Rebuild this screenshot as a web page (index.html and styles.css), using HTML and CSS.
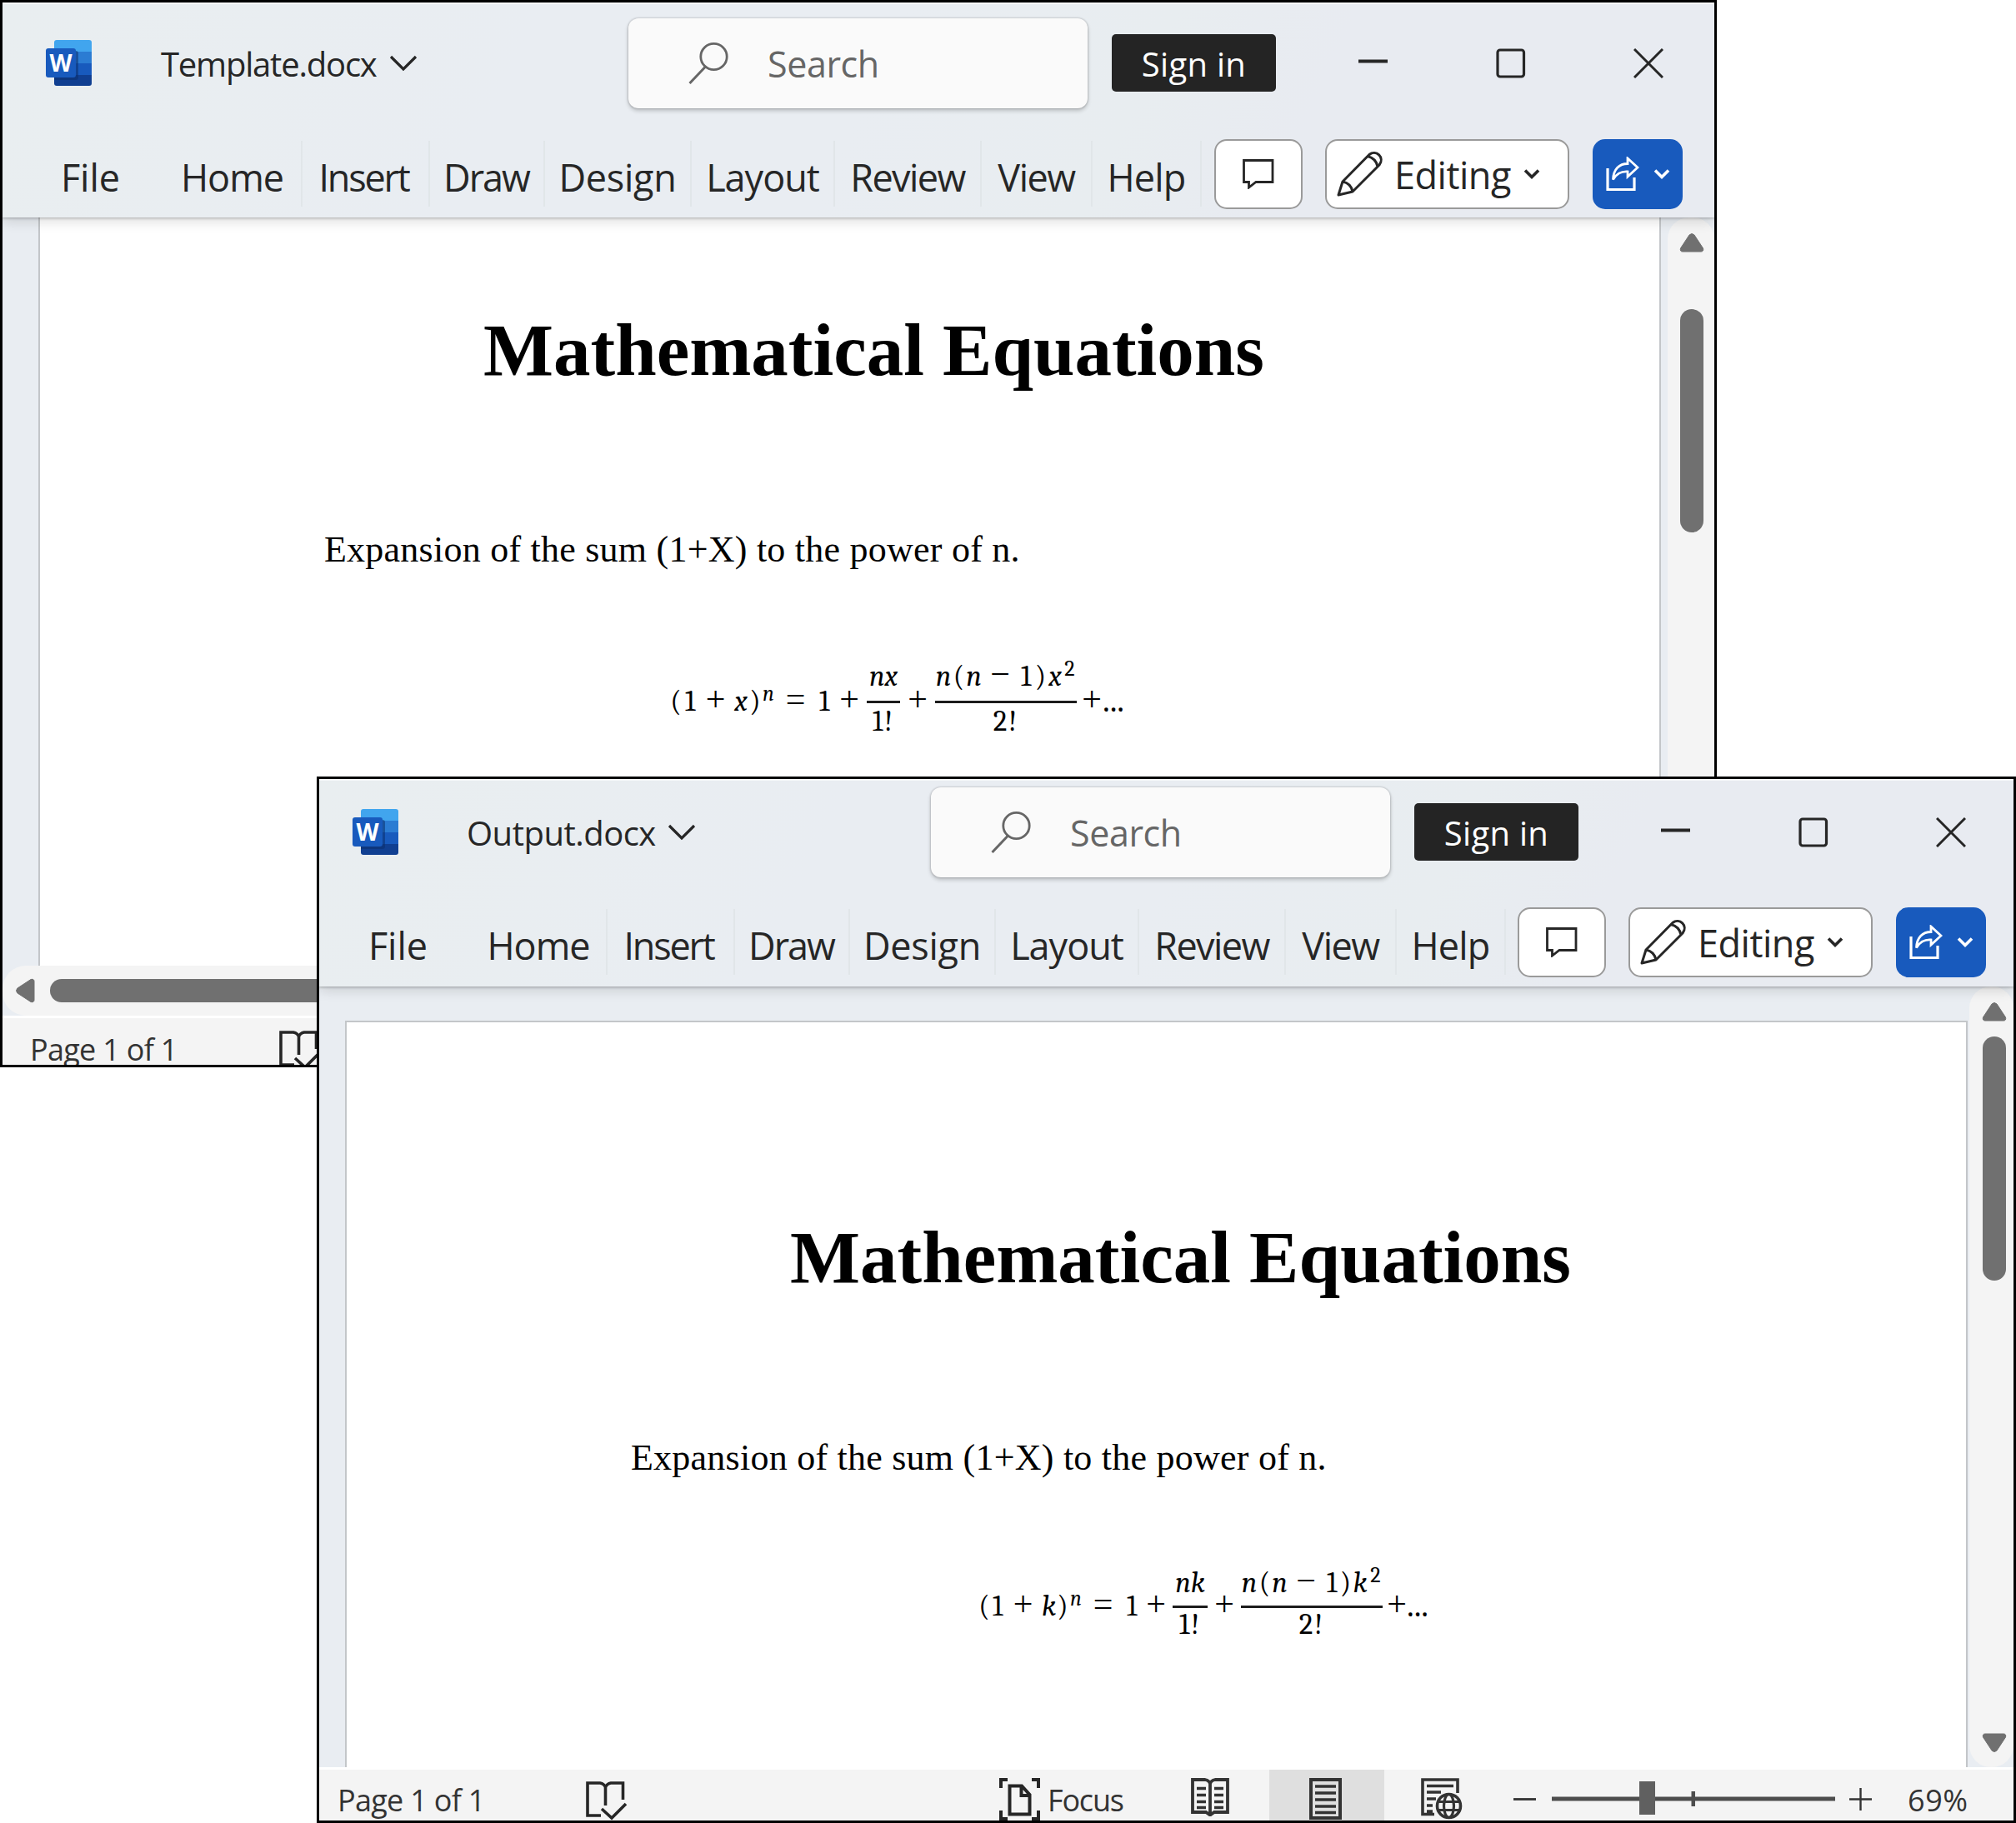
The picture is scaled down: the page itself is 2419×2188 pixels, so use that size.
FILE: index.html
```
<!DOCTYPE html>
<html lang="en">
<head>
<meta charset="utf-8">
<title>Mathematical Equations</title>
<link rel="stylesheet" href="styles.css">
</head>
<body>
<svg class="defs" width="0" height="0" aria-hidden="true">
  <symbol id="word" viewBox="0 0 55 55">
    <clipPath id="sheet"><rect x="10" y="0" width="45" height="55" rx="3"/></clipPath>
    <g clip-path="url(#sheet)">
      <rect x="10" width="45" height="14" fill="#41a5ee"/>
      <rect x="10" y="14" width="45" height="14" fill="#2b7cd3"/>
      <rect x="10" y="28" width="45" height="14" fill="#185abd"/>
      <rect x="10" y="42" width="45" height="13" fill="#103f91"/>
      <rect x="3" y="13" width="36" height="35" rx="3" fill="#0b2f6e" opacity=".55"/>
    </g>
    <rect x="0" y="10" width="36" height="35" rx="3" fill="#185abd"/>
  </symbol>
  <symbol id="chev" viewBox="0 0 34 20"><path d="M2 2 17 17 32 2" fill="none" stroke="currentColor" stroke-width="3.2"/></symbol>
  <symbol id="chev-s" viewBox="0 0 20 14"><path d="M2 2.5 10 10.5 18 2.5" fill="none" stroke="currentColor" stroke-width="3.6"/></symbol>
  <symbol id="lens" viewBox="0 0 48 52"><circle cx="30.500" cy="18" r="15.700" fill="none" stroke="currentColor" stroke-width="2.800"/><path d="M20.500 30 1.500 50" fill="none" stroke="currentColor" stroke-width="3"/></symbol>
  <symbol id="min" viewBox="0 0 36 36"><path d="M0 15.500H35" stroke="currentColor" stroke-width="4"/></symbol>
  <symbol id="max" viewBox="0 0 36 36"><rect x="2" y="2" width="31.500" height="32" rx="3" fill="none" stroke="currentColor" stroke-width="3.200"/></symbol>
  <symbol id="close" viewBox="0 0 36 36"><path d="M1 1 35 35M35 1 1 35" stroke="currentColor" stroke-width="3"/></symbol>
  <symbol id="comment" viewBox="0 0 38 36"><path d="M1.500 1.500H36V27.500H16L7.500 34V27.500H1.500Z" fill="none" stroke="currentColor" stroke-width="2.800"/></symbol>
  <symbol id="pencil" viewBox="0 0 56 56"><path d="M2 53 7 37 39 4.500C47-2 58 8 51 17L19 49ZM7 37Q17 39 19 49M37 6.500Q47 9 49 19" fill="none" stroke="currentColor" stroke-width="3" stroke-linejoin="round"/></symbol>
  <symbol id="share" viewBox="0 0 40 42"><path d="M2 14V39.500H34V25" fill="none" stroke="currentColor" stroke-width="3.200"/><path d="M26 2 38 13 26 24V18C18 17.500 13 20 8.500 27.500 9 15 16 8.500 26 8.500Z" fill="none" stroke="currentColor" stroke-width="2.800"/></symbol>
  <symbol id="arrow" viewBox="0 0 32 26"><path d="M13 4Q16 1 19 4L29.500 20Q30.500 24 27 24H5Q1.500 24 2.500 20Z" fill="#707070" stroke="#707070"/></symbol>
  <symbol id="proof" viewBox="0 0 50 48"><path d="M18 41H2V2H17Q22 3 23.500 7 25 3 30 2H44.500V22M23.500 7V29M19 33 31 44 48 27" fill="none" stroke="currentColor" stroke-width="3.600"/></symbol>
  <symbol id="focus" viewBox="0 0 50 51"><path d="M2 12V2H10M39 2H47V12M2 39V49H10M39 49H47V39" fill="none" stroke="currentColor" stroke-width="4"/><path d="M12.500 9.500H27L36.500 20V43.500H12.500ZM26.500 10V21H36.500" fill="none" stroke="currentColor" stroke-width="4"/></symbol>
  <symbol id="read" viewBox="0 0 46 46"><path d="M2 2H17Q22 3 23 7 24 3 29 2H44V41H28L23 44.500 18 41H2ZM23 7V43" fill="none" stroke="currentColor" stroke-width="3.800"/><path d="M7 12.500H18M7 20.500H18M7 28.500H18M7 35.500H18M28 12.500H39M28 20.500H39M28 28.500H39M28 35.500H39" stroke="currentColor" stroke-width="3.400"/></symbol>
  <symbol id="print" viewBox="0 0 39 50"><rect x="2" y="2" width="35" height="46" fill="none" stroke="currentColor" stroke-width="4"/><path d="M7 10H32M7 18H32M7 26H32M7 34H32M7 41.500H32" stroke="currentColor" stroke-width="3.600"/></symbol>
  <symbol id="web" viewBox="0 0 50 50"><path d="M16 43.500H2V2H44V18M7 9.500H39M7 17H24M7 25H18M7 33H14M7 40H14" fill="none" stroke="currentColor" stroke-width="3.600"/><circle cx="33.500" cy="33.500" r="14" fill="none" stroke="currentColor" stroke-width="3.600"/><ellipse cx="33.500" cy="33.500" rx="6" ry="14" fill="none" stroke="currentColor" stroke-width="3.200"/><path d="M20 28.500H47M20 38.500H47" stroke="currentColor" stroke-width="3.200"/></symbol>
  <symbol id="plus" viewBox="0 0 27 27"><path d="M0 13.500H27M13.500 0V27" stroke="currentColor" stroke-width="2.400"/></symbol>
  <symbol id="minus" viewBox="0 0 27 27"><path d="M0 13.500H27" stroke="currentColor" stroke-width="2.800"/></symbol>
</svg>

<main class="desktop">
  <section class="window template">
    <header class="chrome">
      <div class="titlebar">
        <svg class="logo" viewBox="0 0 55 55"><use href="#word"/><text x="18" y="37.500" text-anchor="middle" class="word-letter">W</text></svg>
        <span class="doc-name name-template">Template.docx</span>
        <svg class="chev"><use href="#chev"/></svg>
        <div class="search"><svg class="lens"><use href="#lens"/></svg><span>Search</span></div>
        <button class="signin">Sign in</button>
        <svg class="ctl"><use href="#min"/></svg>
        <svg class="ctl"><use href="#max"/></svg>
        <svg class="ctl"><use href="#close"/></svg>
      </div>
      <div class="ribbon">
        <nav class="tabs">
          <span class="tab file">File</span><span class="tab home">Home</span><span class="tab insert">Insert</span><span class="tab draw">Draw</span><span class="tab design">Design</span><span class="tab layout">Layout</span><span class="tab review">Review</span><span class="tab view">View</span><span class="tab help">Help</span>
        </nav>
        <button class="btn comment"><svg class="i-comment"><use href="#comment"/></svg></button>
        <button class="btn editing"><svg class="i-pencil"><use href="#pencil"/></svg><span>Editing</span><svg class="chev-s"><use href="#chev-s"/></svg></button>
        <button class="btn share"><svg class="i-share"><use href="#share"/></svg><svg class="chev-s"><use href="#chev-s"/></svg></button>
      </div>
    </header>
    <div class="canvas">
      <article class="page">
        <h1>Mathematical Equations</h1>
        <p>Expansion of the sum (1+X) to the power of n.</p>
        <div class="equation">
          <span class="w18">(</span><span class="w16">1</span><span class="w45 op">+</span><i class="w16">x</i><span class="w18">)</span><i class="w14 sup">n</i><span class="w51 op">=</span><span class="w18">1</span><span class="w42 op">+</span>
          <span class="frac w40"><span class="num"><i>nx</i></span><span class="den">1!</span></span>
          <span class="w42 op">+</span>
          <span class="frac w170"><span class="num"><i class="w20">n</i><span class="w17">(</span><i class="w19">n</i><span class="w44 op">−</span><span class="w18">1</span><span class="w17">)</span><i class="w18">x</i><span class="w17 sup">2</span></span><span class="den">2!</span></span>
          <span class="w36 op">+</span><span class="dots">...</span>
        </div>
      </article>
      <div class="vscroll"><svg class="arrow"><use href="#arrow"/></svg><div class="thumb"></div></div>
    </div>
    <div class="hscroll"><svg class="arrow left"><use href="#arrow"/></svg><div class="hthumb"></div></div>
    <footer class="status"><span class="pages">Page 1 of 1</span><svg class="i-proof"><use href="#proof"/></svg></footer>
  </section>

  <section class="window output">
    <header class="chrome">
      <div class="titlebar">
        <svg class="logo" viewBox="0 0 55 55"><use href="#word"/><text x="18" y="37.500" text-anchor="middle" class="word-letter">W</text></svg>
        <span class="doc-name name-output">Output.docx</span>
        <svg class="chev"><use href="#chev"/></svg>
        <div class="search"><svg class="lens"><use href="#lens"/></svg><span>Search</span></div>
        <button class="signin">Sign in</button>
        <svg class="ctl"><use href="#min"/></svg>
        <svg class="ctl"><use href="#max"/></svg>
        <svg class="ctl"><use href="#close"/></svg>
      </div>
      <div class="ribbon">
        <nav class="tabs">
          <span class="tab file">File</span><span class="tab home">Home</span><span class="tab insert">Insert</span><span class="tab draw">Draw</span><span class="tab design">Design</span><span class="tab layout">Layout</span><span class="tab review">Review</span><span class="tab view">View</span><span class="tab help">Help</span>
        </nav>
        <button class="btn comment"><svg class="i-comment"><use href="#comment"/></svg></button>
        <button class="btn editing"><svg class="i-pencil"><use href="#pencil"/></svg><span>Editing</span><svg class="chev-s"><use href="#chev-s"/></svg></button>
        <button class="btn share"><svg class="i-share"><use href="#share"/></svg><svg class="chev-s"><use href="#chev-s"/></svg></button>
      </div>
    </header>
    <div class="canvas">
      <article class="page">
        <h1>Mathematical Equations</h1>
        <p>Expansion of the sum (1+X) to the power of n.</p>
        <div class="equation">
          <span class="w16">(</span><span class="w16">1</span><span class="w45 op">+</span><i class="w16">k</i><span class="w18">)</span><i class="w14 sup">n</i><span class="w51 op">=</span><span class="w18">1</span><span class="w40 op">+</span>
          <span class="frac w42"><span class="num"><i>nk</i></span><span class="den">1!</span></span>
          <span class="w40 op">+</span>
          <span class="frac w170"><span class="num"><i class="w20">n</i><span class="w17">(</span><i class="w19">n</i><span class="w44 op">−</span><span class="w18">1</span><span class="w15">)</span><i class="w20">k</i><span class="w17 sup">2</span></span><span class="den">2!</span></span>
          <span class="w34 op">+</span><span class="dots">...</span>
        </div>
      </article>
      <div class="vscroll"><svg class="arrow"><use href="#arrow"/></svg><div class="thumb"></div><svg class="arrow down"><use href="#arrow"/></svg></div>
    </div>
    <footer class="status">
      <span class="pages">Page 1 of 1</span><svg class="i-proof"><use href="#proof"/></svg>
      <svg class="i-focus"><use href="#focus"/></svg><span class="focus">Focus</span>
      <span class="view-read"><svg class="i-read"><use href="#read"/></svg></span>
      <span class="view-print"><svg class="i-print"><use href="#print"/></svg></span>
      <svg class="i-web"><use href="#web"/></svg>
      <svg class="zoom-btn zoom-out"><use href="#minus"/></svg>
      <svg class="slider" viewBox="0 0 340 40"><path d="M0 21H340" stroke="#4d4d4d" stroke-width="5"/><rect x="105" y="0" width="19" height="40" fill="#606060"/><rect x="167.500" y="12" width="4.500" height="18" fill="#4d4d4d"/></svg>
      <svg class="zoom-btn"><use href="#plus"/></svg>
      <span class="percent">69%</span>
    </footer>
  </section>
</main>
</body>
</html>
```
FILE: styles.css
```
* { box-sizing: border-box; }
body { margin: 0; background: #fff; color: #262626; font-family: "Open Sans", "Noto Sans", sans-serif; }
button { font: inherit; color: inherit; border: 0; padding: 0; margin: 0; }
svg { display: block; flex: none; }
.defs { position: absolute; }
.word-letter { font: bold 28px "Open Sans", sans-serif; fill: #fff; }

.desktop { position: relative; width: 2419px; height: 2188px; overflow: hidden; }
.window { position: absolute; display: flex; flex-direction: column; border: 3px solid #000; background: #e9edf2; overflow: hidden; }
.template { left: 0; top: 0; width: 2060px; height: 1281px; }
.output { left: 380px; top: 932px; width: 2039px; height: 1256px; }

.chrome { position: relative; z-index: 1; flex: none; background: linear-gradient(115deg, #e9eef0, #e9edf2 30%, #e9edf2 50%, #e8edf0 65%, #e8ebf1 75%); box-shadow: inset 0 2px #f6f8fa, 0 1px 3px rgba(0, 0, 0, .25), 0 5px 14px rgba(0, 0, 0, .13); }
.titlebar { display: flex; align-items: center; height: 145px; padding: 0 61px 0 52px; }
.logo { width: 55px; height: 55px; }
.doc-name { margin-left: 83px; padding-top: 2px; font-size: 40px; line-height: 56px; white-space: nowrap; }
.name-template { width: 264px; letter-spacing: -1.2px; }
.name-output { width: 233px; letter-spacing: -.5px; margin-left: 82px; }
.chev { width: 34px; height: 20px; margin-left: 10px; }
.name-output + .chev { margin-left: 8px; }
.search { display: flex; align-items: center; width: 551px; height: 108px; margin-left: auto; padding-left: 72px; gap: 47px; border-radius: 12px; background: #fafafa; color: #666; font-size: 43px; letter-spacing: -.4px; box-shadow: 0 0 2px 1px rgba(0, 0, 0, .13), 0 3px 5px rgba(0, 0, 0, .2); }
.search span { padding-top: 2px; }
.lens { width: 48px; height: 52px; }
.signin { width: 197px; height: 69px; margin: 0 99px 0 29px; padding-top: 2px; border-radius: 5px; background: #242424; color: #fff; font-size: 40px; letter-spacing: .3px; line-height: 67px; }
.ctl { width: 36px; height: 36px; }
.ctl + .ctl { margin-left: 129px; }

.ribbon { display: flex; align-items: center; height: 113px; padding: 8px 38px 0 15px; font-size: 45px; }
.tabs { display: flex; margin-right: auto; }
.tab { height: 79px; padding-top: 8px; line-height: 72px; text-align: center; border-right: 2px solid #e1e6e9; white-space: nowrap; }
.file { width: 181px; padding-left: 2px; letter-spacing: 0; border-color: transparent; }
.home { width: 164px; padding-right: 3px; letter-spacing: -1px; }
.insert { width: 153px; padding-right: 4px; letter-spacing: -2.2px; }
.draw { width: 138px; padding-right: 1px; letter-spacing: -2px; }
.design { width: 176px; letter-spacing: -.3px; }
.layout { width: 172px; letter-spacing: -1px; }
.review { width: 176px; letter-spacing: -1.6px; }
.view { width: 133px; letter-spacing: -1.5px; }
.help { width: 131px; letter-spacing: -.8px; }
.btn { display: flex; align-items: center; height: 84px; border: 2px solid #9a9a9a; border-radius: 15px; background: #fff; }
.comment { width: 106px; margin-right: 27px; padding-left: 32px; }
.i-comment { width: 38px; height: 36px; }
.editing { width: 293px; margin-right: 28px; padding-left: 12px; letter-spacing: -.5px; line-height: 80px; }
.editing span { width: 150px; margin-left: 13px; text-align: left; padding-top: 3px; }
.i-pencil { width: 56px; height: 56px; }
.chev-s { width: 20px; height: 14px; margin-left: 5px; }
.share { width: 108px; border: 0; padding-left: 16px; background: #185abd; color: #fff; }
.i-share { width: 40px; height: 42px; }
.share .chev-s { margin-left: 17px; }

.canvas { display: flex; flex: 1; min-height: 0; }
.page { width: 1947px; margin-left: 43px; padding: 109px 0 0 341px; border: solid #c3c6c9; border-width: 0 2px; background: #fff; color: #000; font-family: "Liberation Serif", serif; overflow: hidden; }
h1 { margin: 0 0 0 191px; font-size: 89px; line-height: 100px; white-space: nowrap; }
p { margin: 165px 0 0; font-size: 44px; line-height: 50px; letter-spacing: .24px; white-space: nowrap; }
.equation { display: flex; align-items: center; height: 120px; margin: 97px 0 0 413px; font: 35px/44px Cambria, Caladea, "Liberation Serif", serif; }
.equation span, .equation i { flex: none; text-align: center; white-space: nowrap; }
.equation .op { font-family: "Liberation Serif", serif; font-size: 42px; padding-bottom: 7px; }
.equation .sup { font-size: 26px; padding-bottom: 18px; }
.equation .frac { display: flex; flex-direction: column; height: 99px; }
.num { display: flex; justify-content: center; height: 51px; line-height: 38px; border-bottom: 3px solid #1c1c1c; }
.num .op.op { line-height: 33px; padding: 0; }
.num .sup.sup { line-height: 20px; padding: 0; }
.den { height: 48px; line-height: 44px; letter-spacing: 2px; }
.dots { margin-left: -5px; font-size: 42px; padding-bottom: 3px; }
.w14 { width: 14px; } .w15 { width: 15px; } .w16 { width: 16px; } .w17 { width: 17px; } .w18 { width: 18px; }
.w19 { width: 19px; } .w20 { width: 20px; } .w34 { width: 34px; } .w36 { width: 36px; } .w40 { width: 40px; }
.w42 { width: 42px; } .w44 { width: 44px; } .w45 { width: 45px; } .w51 { width: 51px; } .w170 { width: 170px; }

.vscroll { display: flex; flex-direction: column; align-items: center; flex: 1; margin-left: 8px; padding: 17px 0 18px 2px; border-radius: 26px 26px 0 0; background: #f4f4f4; }
.arrow { width: 32px; height: 26px; }
.thumb { width: 28px; height: 268px; margin-top: 67px; border-radius: 14px; background: #707070; }
.hscroll { display: flex; align-items: center; flex: none; height: 60px; padding-left: 11px; border-radius: 28px 0 0 28px; background: #f4f4f4; }
.left { transform: rotate(-90deg); }
.hthumb { width: 1800px; height: 28px; margin-left: 14px; border-radius: 14px; background: #707070; }

.status { display: flex; flex: none; height: 59px; border-top: 3px solid #fff; background: #f4f4f4; color: #333; font-size: 36px; line-height: 48px; white-space: nowrap; overflow: hidden; }
.pages { width: 296px; margin-left: 33px; padding-top: 14px; letter-spacing: -.7px; }
.i-proof { width: 50px; height: 48px; margin: 15px 0 0 3px; color: #262626; }

.output .titlebar { height: 127px; padding: 0 57px 0 40px; }
.output .ribbon { height: 122px; padding: 15px 33px 0 4px; }
.output .home { width: 161px; }
.output .design { width: 175px; }
.output .page { margin: 41px 0 0 31px; border-top-width: 2px; padding-top: 232px; }
.output p { margin-top: 166px; }
.output .equation { margin: 93px 0 0 416px; }
.output .num { line-height: 42px; }
.output .num .op.op { line-height: 37px; }
.output .num .sup.sup { line-height: 24px; }
.output .den { line-height: 39px; }
.output .vscroll { margin-left: 2px; padding: 17px 0 16px 6px; border-radius: 26px; }
.output .thumb { height: 293px; margin-top: 17px; }
.down { margin-top: auto; transform: rotate(180deg); }
.output .status { height: 64px; }
.output .pages { margin-left: 22px; padding-top: 13px; width: 295px; }
.output .i-proof { margin-top: 14px; }
.i-focus { width: 50px; height: 51px; margin: 10px 0 0 446px; color: #262626; }
.focus { width: 172px; margin-left: 8px; padding-top: 13px; letter-spacing: -1.2px; }
.view-read { width: 94px; padding-top: 10px; }
.i-read { width: 46px; height: 46px; }
.view-print { width: 138px; padding: 10px 0 0 48px; background: #dfdfdf; }
.i-print { width: 39px; height: 50px; }
.i-web { width: 50px; height: 50px; margin: 10px 0 0 44px; }
.zoom-btn { width: 27px; height: 27px; margin-top: 22px; }
.zoom-out { margin-left: 61px; }
.slider { width: 340px; height: 40px; margin: 14px 17px 0 19px; }
.percent { margin-left: 43px; padding-top: 13px; letter-spacing: .6px; }
```
